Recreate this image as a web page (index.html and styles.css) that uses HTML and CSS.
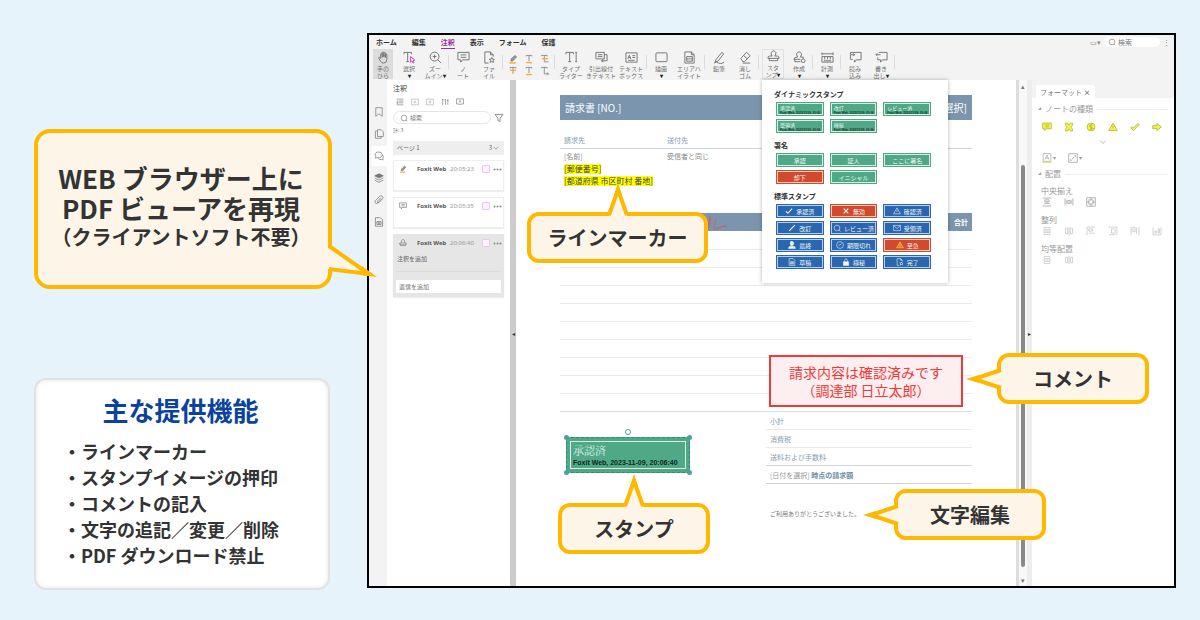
FILE: index.html
```html
<!DOCTYPE html>
<html lang="ja">
<head>
<meta charset="utf-8">
<meta name="viewport" content="width=device-width, initial-scale=1">
<title>WEBブラウザー上のPDFビューア</title>
<link rel="stylesheet" href="styles.css">
</head>
<body>
<svg class="sprite" aria-hidden="true">
  <symbol id="hand" viewBox="0 0 14 14"><path d="M4 8V3.500q0-1 .8-1t.8 1V7M5.600 6.500V2q0-1 .9-1t.9 1v4.500M7.400 6.500V2.500q0-1 .8-1t.8 1V7M9 7V4q0-1 .8-1t.8 1v5q0 4-3.600 4-2 0-3.200-2L2 8q-.5-1 .3-1.200T4 8"/></symbol>
  <symbol id="select" viewBox="0 0 14 14"><path d="M1 3.500V1.500h8v2M5 1.500v10M3.500 11.500h3"/><path class="pink" d="M8 6v6l1.600-1.400L11 13l1-.6-1.200-2.100 2-.5z"/></symbol>
  <symbol id="zoomin" viewBox="0 0 14 14"><circle cx="6" cy="6" r="4.800"/><path d="M6 4v4M4 6h4M9.500 9.500L13 13"/></symbol>
  <symbol id="note" viewBox="0 0 14 14"><path d="M1 1.500h12v8H6L4 12V9.500H1zM4 4.200h6M4 6.800h6"/></symbol>
  <symbol id="file" viewBox="0 0 14 14"><path d="M6 13H2V1h6l3 3v2M8 1v3h3M9.500 7l.8 1.800 2 .2-1.500 1.300.5 2-1.800-1-1.800 1 .5-2L6.700 9l2-.2z"/></symbol>
  <symbol id="marker" viewBox="0 0 14 14"><path class="gold" d="M2 12.500h9"/><path class="pen" d="M4 10l.5-3 5-5 2.500 2-5 5.500z"/></symbol>
  <symbol id="tline" viewBox="0 0 14 14"><path d="M3 3.500V2h8v1.500M7 2v8"/><path class="gold" d="M3 12h8"/></symbol>
  <symbol id="tstrike" viewBox="0 0 14 14"><path d="M3 3.500V2h8v1.500M7 2v9"/><path class="gold" d="M3 6h8"/></symbol>
  <symbol id="trepl" viewBox="0 0 14 14"><path d="M2 3V2h8v1.500M6 2v9h6"/><path class="gold" d="M3 6.500h8"/></symbol>
  <symbol id="tins" viewBox="0 0 14 14"><path d="M2 3V2h8v1.500M6 2v9h6M10 9l2 2-2 2"/></symbol>
  <symbol id="typewriter" viewBox="0 0 14 14"><path d="M1 3.500V1.500h8v2M5 1.500v10M3.500 11.500h3M12 1.500v10M11 1.500h2M11 11.500h2"/></symbol>
  <symbol id="callout" viewBox="0 0 14 14"><path d="M1 1.500h9v7H1zM3 4h5M3 6h5M10 4h3v6.500H7M9 9l-2 1.500L9 12"/></symbol>
  <symbol id="textbox" viewBox="0 0 14 14"><path d="M1 2h12v10H1zM3 8.500l1.700-4 1.600 4M3.500 7h2.300M8 5h3M8 7h3M3.500 10h7"/></symbol>
  <symbol id="rect" viewBox="0 0 14 14"><rect x="1" y="2" width="12" height="9.500" rx="1"/></symbol>
  <symbol id="area" viewBox="0 0 14 14"><path d="M2 1h7l3 3v9H2zM9 1v3h3M4 6h6v5H4zM4 8.500h6"/></symbol>
  <symbol id="pencil" viewBox="0 0 14 14"><path d="M3 9.500L9.500 1.500l2 1.500-6 8-3 .8zM1 13q3-2 5 0t6-1"/></symbol>
  <symbol id="eraser" viewBox="0 0 14 14"><path d="M2 8l6-6.500 4 3.500-6 6.500H4zM5 4.800L9 8.500M4 13h8"/></symbol>
  <symbol id="stamp" viewBox="0 0 14 14"><path d="M5.500 6.500Q4 4 4.500 2.500 5.500 1 7 1t2.500 1.500Q10 4 8.500 6.500h3Q13 6.500 13 9H1q0-2.500 1.500-2.500zM2.500 9v2.500h9V9"/></symbol>
  <symbol id="stampadd" viewBox="0 0 14 14"><path d="M5 6.500Q3.500 4 4 2.500 5 1 6.500 1T9 2.500Q9.500 4 8 6.500h3V8M1 9q0-2.500 4-2.500M1 9h7M2 9v2.500h6"/><circle cx="11" cy="10.500" r="2"/></symbol>
  <symbol id="measure" viewBox="0 0 14 14"><path d="M1 1.500v3M13 1.500v3M1 3h12M1 6h12v6H1zM4 6v3M7 6v3M10 6v3M3 10.500h8"/></symbol>
  <symbol id="import" viewBox="0 0 14 14"><path d="M4 9H1.500V1.500h11.500v8H8L6 12V9.500M2 4h4M4.500 2.500L6 4 4.500 5.500"/></symbol>
  <symbol id="export" viewBox="0 0 14 14"><path d="M4 1.500h9v8H8L6 12V9.500H3V7M1 4h5M2.500 2.500L1 4l1.500 1.500"/></symbol>
  <symbol id="search" viewBox="0 0 14 14"><circle cx="7" cy="7" r="5"/><path d="M10.500 10.500L13 13"/></symbol>
  <symbol id="filter" viewBox="0 0 14 14"><path d="M1.500 2h11L8.500 7.500V12l-3-1.500v-3z"/></symbol>
  <symbol id="bookmark" viewBox="0 0 14 14"><path d="M2.500 1h9v12L7 9.500 2.500 13z"/></symbol>
  <symbol id="pages" viewBox="0 0 14 14"><path d="M5 1h5l3 3v6.500H5zM5 3H2v10h8v-2.500"/></symbol>
  <symbol id="chat" viewBox="0 0 14 14"><path d="M2 10l.5-2Q-.5 3 5 1.500q6-1 6.500 3.500.5 5-8 4.500zM12 5.500q2.500 3 .3 5l.5 2-2-.7q-3.300.8-4.800-1.300M4 5.500h.5M6.500 5.500H7M9 5.500h.5"/></symbol>
  <symbol id="layers" viewBox="0 0 14 14"><path class="solid" d="M7 1l6 3-6 3-6-3z"/><path d="M1 7l6 3 6-3M1 10l6 3 6-3"/></symbol>
  <symbol id="clip" viewBox="0 0 14 14"><path d="M11 5l-5.500 6Q3.500 13 2 11.300T2.300 7.500L8 1.800q2-1.500 3.700 0t.3 3.500L7 10.500Q5.800 11.300 5 10.500T5 8.500L9.500 4"/></symbol>
  <symbol id="doc" viewBox="0 0 14 14"><path d="M2 1h7l3 3v9H2zM4 6.500h6v4H4zM6 6.500v4M8 6.500v4"/></symbol>
  <symbol id="list" viewBox="0 0 14 14"><path d="M1 2h12M5 5.500h8M5 8.500h8M1 12h12M2.500 4.500v5M1 8l1.500 1.500L4 8"/></symbol>
  <symbol id="plusbox" viewBox="0 0 14 14"><path d="M1 2h12v10H1zM7 4.500v5M4.500 7h5"/></symbol>
  <symbol id="sort" viewBox="0 0 14 14"><path d="M3 12V2M1 4l2-2 2 2M8 2v10M6.500 4L8 2M12 2v10M11 4.500h2"/></symbol>
  <symbol id="xnote" viewBox="0 0 14 14"><path d="M1 1.500h12v9H8L7 12l-1-1.500H1zM5 4l4 4M9 4L5 8"/></symbol>
  <symbol id="down" viewBox="0 0 14 14"><path d="M3 5l4 4 4-4"/></symbol>
  <symbol id="check" viewBox="0 0 14 14"><path d="M1.500 7.500L5 11l7.500-8"/></symbol>
  <symbol id="cross" viewBox="0 0 14 14"><path d="M3 3l8 8M11 3l-8 8"/></symbol>
  <symbol id="tri" viewBox="0 0 14 14"><path d="M7 1.500L13 12H1zM7 5v4M7 10.500v.5"/></symbol>
  <symbol id="slash" viewBox="0 0 14 14"><path d="M2 12L12 2"/></symbol>
  <symbol id="mail" viewBox="0 0 14 14"><path d="M1 2.500h12v9H1zM1 3l6 5 6-5"/></symbol>
  <symbol id="person" viewBox="0 0 14 14"><path class="solid" d="M7 1q3 0 3 3T7 8 4 4t3-3zM1 13q0-4 4-4h4q4 0 4 4z"/></symbol>
  <symbol id="clock" viewBox="0 0 14 14"><circle cx="7" cy="7" r="6"/><path d="M7 7l3-3M7 7H4"/></symbol>
  <symbol id="lock" viewBox="0 0 14 14"><path class="solid" d="M2.500 6.500h9V13h-9z"/><path d="M4.500 6V4Q5 1.500 7 1.500T9.500 4v2"/></symbol>
  <symbol id="alignv" viewBox="0 0 14 14"><path d="M1 1.500h12M1 12.500h12M4 4h6v2.500H4zM7 6.500V9M3 9h8"/></symbol>
  <symbol id="alignh" viewBox="0 0 14 14"><path d="M1.500 2v10M12.500 2v10M4 4v6M10 4v6M5.500 5h3v4h-3z"/></symbol>
  <symbol id="alignc" viewBox="0 0 14 14"><path d="M1 1h12v12H1zM4 4h6v6H4zM7 1v4M7 9v4M1 7h4M9 7h4"/></symbol>
  <symbol id="boxh" viewBox="0 0 14 14"><path d="M3 2h8v3H3zM1 7h12M3 9h8v3H3z"/></symbol>
  <symbol id="boxv" viewBox="0 0 14 14"><path d="M2 3h3v8H2zM7 1v12M9 3h3v8H9z"/></symbol>
  <symbol id="boxl" viewBox="0 0 14 14"><path d="M13 1.500H1.500V13M4 4h5v3H4zM4 10h8"/></symbol>
  <symbol id="boxr" viewBox="0 0 14 14"><path d="M1 1.500h11.500V13M5 4h5v6H5zM2 12h8"/></symbol>
  <symbol id="boxt" viewBox="0 0 14 14"><path d="M1.500 1v12M12.500 1v12M4 2h3v6H4zM9 2v9"/></symbol>
  <symbol id="boxb" viewBox="0 0 14 14"><path d="M1.500 2v10.500h11V2M4 7h2v3H4zM8.500 4h2v6h-2z"/></symbol>
  <symbol id="dollar" viewBox="0 0 14 14"><circle cx="7" cy="7" r="5.500"/><path d="M9 4.500Q5 3.500 5 5.500T9 8.500 5 10M7 3v8"/></symbol>
  <symbol id="arrow" viewBox="0 0 14 14"><path d="M1 5h6V2l6 5-6 5V9H1z"/></symbol>
  <symbol id="ytick" viewBox="0 0 14 14"><path d="M1 8l2-1.500 2 2L11 2l2 1.500L5 12z"/></symbol>
  <symbol id="ycross" viewBox="0 0 14 14"><path d="M2 1.500h3l2 3 2-3h3v3L9.500 7l2.500 3v2.500H9l-2-3-2 3H2V10l2.500-3L2 4.500z"/></symbol>
  <symbol id="fontbox" viewBox="0 0 14 14"><path d="M1 1h12v12H1zM4 10l3-7 3 7M5 8h4"/></symbol>
  <symbol id="alpha" viewBox="0 0 14 14"><path d="M1 1h12v12H1zM9 3.500h1.500V5M5 10.500H3.500V9M5 9l4-4"/></symbol>
</svg>

<main class="slide">
  <section class="intro">
    <div class="callout callout-main">
      <p>WEB ブラウザー上に<br>PDF ビューアを再現</p>
      <p class="sub">（クライアントソフト不要）</p>
      <svg class="tail tail-main" viewBox="0 0 50 36"><path class="tail-fill" d="M0 5L4 5 46 32 4 26 0 26z"/><path class="tail-line" d="M1 3L41 31 1 26"/><path class="tail-tip" d="M34 23L49 34 32 32z"/></svg>
    </div>
    <div class="features">
      <h2>主な提供機能</h2>
      <ul>
        <li>ラインマーカー</li>
        <li>スタンプイメージの押印</li>
        <li>コメントの記入</li>
        <li>文字の追記／変更／削除</li>
        <li>PDF ダウンロード禁止</li>
      </ul>
    </div>
  </section>

  <section class="app">
    <header class="top">
      <nav class="menu">
        <a href="#">ホーム</a><a href="#">編集</a><a href="#" class="on">注釈</a><a href="#">表示</a><a href="#">フォーム</a><a href="#">保護</a>
        <span class="menu-end">
          <button class="mini" aria-label="表示切替">▭▾</button>
          <label class="find"><svg class="ic"><use href="#search"/></svg><input type="text" placeholder="検索" aria-label="検索"></label>
          <button class="mini" aria-label="その他">⋮</button>
        </span>
      </nav>
      <div class="ribbon">
        <button class="tool on"><svg class="ic"><use href="#hand"/></svg>手の<br>ひら</button>
        <button class="tool"><svg class="ic"><use href="#select"/></svg>選択<br><b>▾</b></button>
        <button class="tool"><svg class="ic"><use href="#zoomin"/></svg>ズー<br>ムイン<b>▾</b></button>
        <i class="sep"></i>
        <button class="tool"><svg class="ic"><use href="#note"/></svg>ノ<br>ート</button>
        <button class="tool"><svg class="ic"><use href="#file"/></svg>ファ<br>イル</button>
        <i class="sep"></i>
        <div class="marks">
          <button aria-label="ハイライト"><svg class="ic"><use href="#marker"/></svg></button>
          <button aria-label="下線"><svg class="ic"><use href="#tline"/></svg></button>
          <button aria-label="置換"><svg class="ic"><use href="#trepl"/></svg></button>
          <button aria-label="取り消し線"><svg class="ic"><use href="#tstrike"/></svg></button>
          <button aria-label="波線"><svg class="ic"><use href="#tline"/></svg></button>
          <button aria-label="挿入"><svg class="ic"><use href="#tins"/></svg></button>
        </div>
        <i class="sep"></i>
        <button class="tool wide"><svg class="ic"><use href="#typewriter"/></svg>タイプ<br>ライター</button>
        <button class="tool wide"><svg class="ic"><use href="#callout"/></svg>引出線付<br>きテキスト</button>
        <button class="tool wide"><svg class="ic"><use href="#textbox"/></svg>テキスト<br>ボックス</button>
        <i class="sep"></i>
        <button class="tool"><svg class="ic"><use href="#rect"/></svg>描画<br><b>▾</b></button>
        <button class="tool wide"><svg class="ic"><use href="#area"/></svg>エリアハ<br>イライト</button>
        <i class="sep"></i>
        <button class="tool"><svg class="ic"><use href="#pencil"/></svg>鉛筆<br>&nbsp;</button>
        <button class="tool"><svg class="ic"><use href="#eraser"/></svg>消し<br>ゴム</button>
        <i class="sep"></i>
        <div class="drop">
          <button class="tool open"><svg class="ic"><use href="#stamp"/></svg>スタ<br>ンプ<b>▾</b></button>
          <div class="stamps">
            <h3>ダイナミックスタンプ</h3>
            <div class="stamp-grid">
              <button class="st dyn">承認済<small>Foxit Web, 2023/11/09, 20:06</small></button>
              <button class="st dyn">改訂<small>Foxit Web, 2023/11/09, 20:06</small></button>
              <button class="st dyn">レビュー済<small>Foxit Web, 2023/11/09, 20:06</small></button>
              <button class="st dyn">受領済<small>Foxit Web, 2023/11/09, 20:06</small></button>
              <button class="st dyn">極秘<small>Foxit Web, 2023/11/09, 20:06</small></button>
            </div>
            <h3>署名</h3>
            <div class="stamp-grid">
              <button class="st">承認</button><button class="st">証人</button><button class="st">ここに署名</button>
              <button class="st red">却下</button><button class="st">イニシャル</button>
            </div>
            <h3>標準スタンプ</h3>
            <div class="stamp-grid">
              <button class="st blue"><svg class="ic bold"><use href="#check"/></svg>承認済</button>
              <button class="st red"><svg class="ic bold"><use href="#cross"/></svg>無効</button>
              <button class="st blue"><svg class="ic"><use href="#tri"/></svg>確認済</button>
              <button class="st blue"><svg class="ic bold"><use href="#slash"/></svg>改訂</button>
              <button class="st blue"><svg class="ic"><use href="#search"/></svg>レビュー済</button>
              <button class="st blue"><svg class="ic"><use href="#mail"/></svg>受領済</button>
              <button class="st blue"><svg class="ic"><use href="#person"/></svg>最終</button>
              <button class="st blue"><svg class="ic"><use href="#clock"/></svg>期限切れ</button>
              <button class="st red"><svg class="ic warn"><use href="#tri"/></svg>至急</button>
              <button class="st blue"><svg class="ic"><use href="#doc"/></svg>草稿</button>
              <button class="st blue"><svg class="ic"><use href="#lock"/></svg>極秘</button>
              <button class="st blue"><svg class="ic"><use href="#file"/></svg>完了</button>
            </div>
          </div>
        </div>
        <button class="tool"><svg class="ic"><use href="#stampadd"/></svg>作成<br><b>▾</b></button>
        <i class="sep"></i>
        <button class="tool"><svg class="ic"><use href="#measure"/></svg>計測<br><b>▾</b></button>
        <i class="sep"></i>
        <button class="tool"><svg class="ic"><use href="#import"/></svg>読み<br>込み</button>
        <button class="tool"><svg class="ic"><use href="#export"/></svg>書き<br>出し<b>▾</b></button>
        <i class="sep"></i>
      </div>
    </header>

    <div class="work">
      <nav class="rail">
        <button aria-label="しおり"><svg class="ic"><use href="#bookmark"/></svg></button>
        <button aria-label="ページ"><svg class="ic"><use href="#pages"/></svg></button>
        <button class="on" aria-label="注釈"><svg class="ic"><use href="#chat"/></svg></button>
        <button aria-label="レイヤー"><svg class="ic"><use href="#layers"/></svg></button>
        <button aria-label="添付"><svg class="ic"><use href="#clip"/></svg></button>
        <button aria-label="フィールド"><svg class="ic"><use href="#doc"/></svg></button>
      </nav>

      <aside class="comments">
        <h3>注釈</h3>
        <div class="actions">
          <svg class="ic"><use href="#list"/></svg><svg class="ic dim"><use href="#plusbox"/></svg><svg class="ic dim"><use href="#plusbox"/></svg><svg class="ic"><use href="#sort"/></svg><svg class="ic"><use href="#xnote"/></svg>
        </div>
        <div class="search-row">
          <label class="find"><svg class="ic"><use href="#search"/></svg><input type="text" placeholder="検索" aria-label="注釈を検索"></label>
          <svg class="ic"><use href="#filter"/></svg>
        </div>
        <p class="count">計: 3</p>
        <div class="page-head"><span>ページ 1</span><span class="fold">3 <svg class="ic"><use href="#down"/></svg></span></div>
        <article class="note">
          <div class="note-head"><svg class="ic"><use href="#marker"/></svg><strong>Foxit Web</strong><time>20:05:23</time><input type="checkbox" aria-label="選択"><svg class="dots" viewBox="0 0 9 3"><circle cx="1.500" cy="1.500" r="1"/><circle cx="4.500" cy="1.500" r="1"/><circle cx="7.500" cy="1.500" r="1"/></svg></div>
        </article>
        <article class="note">
          <div class="note-head"><svg class="ic"><use href="#note"/></svg><strong>Foxit Web</strong><time>20:05:35</time><input type="checkbox" aria-label="選択"><svg class="dots" viewBox="0 0 9 3"><circle cx="1.500" cy="1.500" r="1"/><circle cx="4.500" cy="1.500" r="1"/><circle cx="7.500" cy="1.500" r="1"/></svg></div>
        </article>
        <article class="note active">
          <div class="note-head"><svg class="ic"><use href="#stamp"/></svg><strong>Foxit Web</strong><time>20:06:40</time><input type="checkbox" aria-label="選択"><svg class="dots" viewBox="0 0 9 3"><circle cx="1.500" cy="1.500" r="1"/><circle cx="4.500" cy="1.500" r="1"/><circle cx="7.500" cy="1.500" r="1"/></svg></div>
          <p>注釈を追加</p>
          <input class="reply" type="text" placeholder="返信を追加" aria-label="返信を追加">
        </article>
      </aside>
      <div class="divider">◂</div>

      <div class="viewer">
        <div class="sheet">
          <div class="title-bar"><span>請求書 [NO.]</span><span>[日付を選択]</span></div>
          <div class="parties labels"><span>請求先</span><span>送付先</span></div>
          <div class="parties values">
            <span>[名前]</span><span>受信者と同じ</span>
            <mark>[郵便番号]</mark>
            <mark>[都道府県 市区町村 番地]</mark>
            <div class="callout callout-line">ラインマーカー
              <svg class="tail tail-up" viewBox="0 0 24 34"><path class="tail-fill" d="M3 34L12 7l9 27z"/><path class="tail-line" d="M3 32L12 7l9 25"/><path class="tail-tip" d="M8 12L12 0l4 12z"/></svg>
            </div>
          </div>
          <div class="items">
            <table>
              <thead><tr><th></th><th>合計</th></tr></thead>
              <tbody>
                <tr><td></td><td></td></tr><tr><td></td><td></td></tr><tr><td></td><td></td></tr><tr><td></td><td></td></tr><tr><td></td><td></td></tr>
                <tr><td></td><td></td></tr><tr><td></td><td></td></tr><tr><td></td><td></td></tr><tr><td></td><td></td></tr><tr><td></td><td></td></tr>
              </tbody>
            </table>
            <svg class="scribble" viewBox="0 0 36 16"><path d="M4 1Q3 8 1 14M5 3L3 13M10 4L8 14q6 0 12-4M13 13q5-4 8 0M32 12l1 1"/></svg>
            <div class="remark">請求内容は確認済みです<br>（調達部 日立太郎）
              <div class="callout callout-comment">コメント
                <svg class="tail tail-left" viewBox="0 0 36 24"><path class="tail-fill" d="M36 3L9 12l27 9z"/><path class="tail-line" d="M35 3L8 12l27 9"/><path class="tail-tip" d="M13 8L0 12l13 4z"/></svg>
              </div>
            </div>
          </div>
          <div class="bottom">
            <div class="approved">
              <div class="approved-in"><span>承認済</span><strong>Foxit Web, 2023-11-09, 20:06:40</strong></div>
              <i class="h h1"></i><i class="h h2"></i><i class="h h3"></i><i class="h h4"></i><i class="knob"></i>
              <div class="callout callout-stamp">スタンプ
                <svg class="tail tail-up" viewBox="0 0 24 34"><path class="tail-fill" d="M3 34L12 7l9 27z"/><path class="tail-line" d="M3 32L12 7l9 25"/><path class="tail-tip" d="M8 12L12 0l4 12z"/></svg>
              </div>
            </div>
            <div class="sums">
              <p>小計</p>
              <p>消費税</p>
              <p class="thick">送料および手数料</p>
              <p class="thick"><span>[日付を選択]</span> <b>時点の請求額</b></p>
              <div class="thanks">ご利用ありがとうございました。
                <div class="callout callout-edit">文字編集
                  <svg class="tail tail-left" viewBox="0 0 36 24"><path class="tail-fill" d="M36 3L9 12l27 9z"/><path class="tail-line" d="M35 3L8 12l27 9"/><path class="tail-tip" d="M13 8L0 12l13 4z"/></svg>
                </div>
              </div>
            </div>
          </div>
        </div>
      </div>
      <div class="scroll"><span>▴</span><div class="track"><i></i></div><span>▾</span></div>
      <div class="divider light">▸</div>

      <aside class="format">
        <div class="tabs"><button>フォーマット <b>×</b></button></div>
        <div class="format-body">
          <h3>ノートの種類</h3>
          <div class="icons yellow">
            <svg class="ic"><use href="#note"/></svg><svg class="ic"><use href="#ycross"/></svg><svg class="ic"><use href="#dollar"/></svg><svg class="ic"><use href="#tri"/></svg><svg class="ic"><use href="#ytick"/></svg><svg class="ic"><use href="#arrow"/></svg>
          </div>
          <div class="more"><svg class="ic"><use href="#down"/></svg></div>
          <div class="icons pick"><span class="color"><svg class="ic"><use href="#fontbox"/></svg>▾</span><span><svg class="ic"><use href="#alpha"/></svg>▾</span></div>
          <h3>配置</h3>
          <h4>中央揃え</h4>
          <div class="icons"><svg class="ic"><use href="#alignv"/></svg><svg class="ic"><use href="#alignh"/></svg><svg class="ic"><use href="#alignc"/></svg></div>
          <h4>整列</h4>
          <div class="icons faint"><svg class="ic"><use href="#boxh"/></svg><svg class="ic"><use href="#boxv"/></svg><svg class="ic"><use href="#boxl"/></svg><svg class="ic"><use href="#boxr"/></svg><svg class="ic"><use href="#boxt"/></svg><svg class="ic"><use href="#boxb"/></svg></div>
          <h4>均等配置</h4>
          <div class="icons faint"><svg class="ic"><use href="#boxh"/></svg><svg class="ic"><use href="#boxv"/></svg></div>
        </div>
      </aside>
    </div>
  </section>
</main>
</body>
</html>
```

FILE: styles.css
```css
* { box-sizing: border-box; margin: 0; padding: 0; }

body {
  background: #e7f3fa;
  color: #333;
  font-family: "Noto Sans CJK JP", sans-serif;
}

button, input { font: inherit; color: inherit; border: 0; background: none; }
a { color: inherit; text-decoration: none; }
h2, h3, h4 { font-weight: 400; }
.sprite { display: none; }

.ic {
  width: 10px;
  height: 10px;
  flex: none;
  fill: none;
  stroke: currentColor;
  stroke-width: 1;
}
.pink { stroke: #c23bc2; }
.pen { fill: #999; }
.gold { stroke: #f0b030; stroke-width: 2; }
.solid { fill: currentColor; }

.slide {
  display: flex;
  gap: 35px;
  min-height: 100vh;
  padding: 33px 24px 31px 34px;
}

/* left column */
.intro {
  flex: none;
  width: 298px;
  padding-top: 96px;
}

.callout {
  border: 4px solid #ffb800;
  border-radius: 12px;
  background: #fcf5e8;
  color: #333;
  font-size: 20px;
  font-weight: 700;
  line-height: 43px;
  text-align: center;
  white-space: nowrap;
}
.callout-main {
  position: relative;
  height: 160px;
  padding: 30px 4px 0 0;
  border-radius: 16px;
  font-size: 26px;
  line-height: 30px;
}
.callout-main .sub { font-size: 20px; line-height: 28px; }

.tail { position: absolute; overflow: visible; }
.tail-fill { fill: #fcf5e8; }
.tail-line { fill: none; stroke: #ffb800; stroke-width: 4; }
.tail-tip { fill: #ffb800; }
.tail-main { left: 290px; top: 110px; width: 50px; height: 36px; }
.tail-up { left: calc(50% - 12px); top: -33px; width: 24px; height: 34px; }
.tail-left { left: -35px; top: 10px; width: 36px; height: 24px; }

.features {
  width: 296px;
  margin-top: 89px;
  padding: 13px 30px 20px 27px;
  border: 2px solid #e2e2e2;
  border-radius: 12px;
  background: #fff;
  box-shadow: inset 0 0 4px #e4e4e4;
}
.features h2 {
  color: #0b439b;
  font-size: 26px;
  font-weight: 700;
  line-height: 34px;
  text-align: center;
}
.features ul {
  margin-top: 11px;
  list-style: none;
  font-size: 18px;
  font-weight: 700;
  line-height: 26px;
  white-space: nowrap;
}
.features li::before { content: "・"; }

/* application window */
.app {
  display: flex;
  flex: 1;
  flex-direction: column;
  min-width: 0;
  margin-bottom: 2px;
  border: 2px solid #000;
  background: #fff;
}
.top { background: #f3f3f3; }

.menu {
  display: flex;
  align-items: center;
  gap: 15px;
  height: 14px;
  padding: 0 4px 0 7px;
  font-size: 7px;
  font-weight: 700;
  line-height: 11px;
}
.menu .on { color: #9a2f9a; box-shadow: 0 1px #9a2f9a; }
.menu-end { display: flex; align-items: center; gap: 3px; margin-left: auto; font-weight: 400; }
.menu .find { width: 56px; height: 10px; }
.mini { color: #888; font-size: 7px; line-height: 10px; }

.find {
  display: flex;
  align-items: center;
  gap: 2px;
  padding: 0 4px;
  border-radius: 8px;
  background: #fff;
  color: #666;
}
.find .ic { width: 8px; height: 8px; }
.find input { width: 100%; min-width: 0; outline: 0; }
::placeholder { color: #777; opacity: 1; }

.ribbon {
  display: flex;
  height: 31px;
  padding-left: 1px;
  color: #707070;
  font-size: 6px;
  line-height: 7px;
}
.tool {
  flex: none;
  width: 26px;
  height: 30px;
  text-align: center;
  white-space: nowrap;
}
.tool .ic { display: block; width: 13px; height: 13px; margin: 1px auto; }
.tool b { color: #222; }
.tool.wide { width: 30px; }
.tool.on { width: 20px; margin: 0 3px; background: #dcdcdc; }
.tool.open { width: 22px; margin: 0 2px; border: 1px solid #e2e2e2; }
.tool.open .ic { margin-top: 0; }
.sep { flex: none; width: 1px; height: 14px; margin: 6px 1px 0 0; background: #dcdcdc; }
.marks {
  display: grid;
  grid-template-columns: repeat(3, 16px);
  flex: none;
  align-content: center;
  gap: 2px 0;
  padding: 0 1px;
}
.marks .ic { display: block; width: 10px; height: 10px; margin: 0 auto; }

/* stamp menu */
.drop { position: relative; flex: none; width: 26px; }
.stamps {
  position: absolute;
  z-index: 3;
  top: 31px;
  left: 2px;
  width: 186px;
  padding: 9px 17px 7px 12px;
  background: #fff;
  box-shadow: 0 0 4px rgba(0, 0, 0, .3);
}
.stamps h3 {
  height: 12px;
  color: #333;
  font-weight: 700;
  line-height: 10px;
}
.stamp-grid {
  display: grid;
  grid-template-columns: repeat(3, 1fr);
  gap: 3px 6px;
  margin: 1px 0 7px 2px;
}
.st {
  display: flex;
  align-items: center;
  justify-content: center;
  gap: 3px;
  height: 14px;
  border: 1px solid #4fa987;
  outline: 1px solid #d8ece4;
  outline-offset: -2px;
  background: #4fa987;
  color: #eef8f4;
  line-height: 7px;
  white-space: nowrap;
}
.st .ic { width: 8px; height: 8px; }
.st .bold { stroke-width: 2; }
.st .warn { color: #ffc84a; fill: #d8862a; }
.st.red { border-color: #d04a2e; outline-color: #f2cfc6; background: #d04a2e; }
.st.blue { border-color: #2a67b0; outline-color: #b9cde6; background: #2a67b0; }
.st.dyn { flex-direction: column; align-items: flex-start; gap: 0; padding-left: 3px; font-size: 5px; line-height: 7px; }
.st small { color: #103326; font: 700 3px/4px "Liberation Sans", sans-serif; }

/* work area */
.work { display: flex; flex: 1; min-height: 0; }

.rail {
  display: flex;
  flex: none;
  flex-direction: column;
  gap: 2px;
  width: 18px;
  padding: 22px 0 0 2px;
  background: #f3f3f3;
  color: #777;
}
.rail button { height: 20px; }
.rail .on { background: #fff; }
.rail .ic { display: block; margin: 0 auto; }

.comments {
  flex: none;
  width: 123px;
  padding: 3px 6px 0;
  color: #666;
  font-size: 6px;
  line-height: 10px;
}
.comments h3 { color: #444; font-size: 7px; }
.actions { display: flex; align-items: center; gap: 7px; height: 18px; padding: 0 3px; }
.actions .ic, .note .ic { width: 8px; height: 8px; }
.dim { opacity: .6; }
.search-row { display: flex; align-items: center; gap: 3px; margin-bottom: 2px; }
.search-row .find { flex: 1; height: 13px; padding: 0 6px; border: 1px solid #e6e6e6; }
.count { font-size: 5px; line-height: 8px; }
.page-head {
  display: flex;
  justify-content: space-between;
  margin: 7px 0 5px;
  padding: 2px 4px;
  background: #eee;
}
.fold { display: flex; align-items: center; }
.fold .ic { width: 8px; height: 8px; }
.note {
  min-height: 31px;
  margin-bottom: 6px;
  padding: 3px 2px;
  border: 1px solid #eee;
  box-shadow: 0 1px 1px #eee;
}
.note-head { display: flex; align-items: center; gap: 3px; padding-left: 3px; font-family: "Noto Sans", sans-serif; }
.note strong { flex: none; width: 30px; margin-left: 7px; color: #555; }
.note time { flex: none; width: 29px; color: #999; }
.note input[type="checkbox"] {
  appearance: none;
  flex: none;
  width: 8px;
  height: 8px;
  border: 1px solid #ecc8ec;
  border-radius: 1px;
  background: #fdf2fd;
}
.dots { flex: none; width: 9px; height: 3px; fill: #888; }
.note.active { border-color: #e6e6e6; background: #e6e6e6; }
.note.active p { margin: 6px 0; padding: 0 0 7px 1px; border-bottom: 1px solid #dcdcdc; }
.reply { display: block; width: 100%; height: 13px; margin-top: 8px; padding: 0 3px; background: #fff; }

.divider {
  display: flex;
  align-items: center;
  justify-content: center;
  flex: none;
  width: 6px;
  background: #ccc;
  color: #333;
  font-size: 6px;
}
.divider.light { width: 5px; background: #ededed; }

/* invoice */
.viewer { flex: 1; min-width: 0; padding: 15px 44px 0; }
.sheet { color: #888; font-size: 7px; }
.title-bar {
  display: flex;
  align-items: center;
  justify-content: space-between;
  height: 25px;
  padding: 0 5px;
  background: #7a95ad;
  color: #fff;
  font-size: 10px;
}
.parties { position: relative; display: grid; grid-template-columns: 103px 1fr; padding: 0 4px; line-height: 12px; }
.labels { margin-top: 14px; padding-bottom: 2px; border-bottom: 1px solid #cdd5dc; color: #7f9bb3; }
.values { padding-top: 1px; }
mark {
  grid-column: 1 / -1;
  justify-self: start;
  height: 10px;
  margin-top: 2px;
  background: #ff0;
  color: #444;
  font-size: 8px;
  line-height: 10px;
}
.values .callout { position: absolute; z-index: 2; top: 63px; left: -33px; width: 181px; }

.items { position: relative; margin-top: 27px; }
.items table { width: 100%; border-collapse: collapse; }
.items th { height: 18px; padding-right: 4px; background: #7a95ad; color: #fff; line-height: 12px; text-align: right; }
.items td { height: 18px; border-bottom: 1px solid #ebebeb; }
.items tr:last-child td { border-color: #ddd; }
.scribble { position: absolute; top: 2px; left: 146px; width: 36px; height: 16px; fill: none; stroke: #c4607c; }

.remark {
  position: absolute;
  right: 9px;
  bottom: 5px;
  width: 194px;
  padding: 6px 0;
  border: 2px solid #f03a3a;
  background: #fdeef0;
  color: #f03a3a;
  font-size: 14px;
  line-height: 18px;
  text-align: center;
}
.callout-comment { position: absolute; z-index: 2; top: -4px; left: 226px; width: 152px; }

.bottom { display: flex; justify-content: space-between; align-items: flex-start; }
.approved {
  position: relative;
  width: 124px;
  margin: 25px 0 0 6px;
  padding: 3px;
  border: 1px dashed #2c8a83;
  background: #4fa987;
}
.approved-in { padding-left: 2px; border: 1px solid #d8ece4; line-height: 8px; white-space: nowrap; }
.approved span { display: block; color: #dcefe7; font: 11px/17px "Noto Serif CJK JP", "Noto Sans CJK JP", serif; }
.approved strong { display: block; padding-bottom: 1px; color: #10241c; font: 700 7px/8px "Liberation Sans", sans-serif; }
.h, .knob { position: absolute; width: 5px; height: 5px; border-radius: 50%; background: #4aa39b; }
.h1 { top: -3px; left: -3px; }
.h2 { top: -3px; right: -3px; }
.h3 { bottom: -3px; left: -3px; }
.h4 { bottom: -3px; right: -3px; }
.knob { top: -9px; left: 58px; width: 6px; height: 6px; border: 1px solid #4aa39b; background: #fff; }
.callout-stamp { position: absolute; z-index: 2; top: 65px; left: -9px; width: 152px; }

.sums { width: 50%; }
.sums p { height: 18px; padding-left: 4px; border-bottom: 1px solid #ebebeb; color: #7f9bb3; line-height: 18px; }
.sums .thick { border-color: #d5d5d5; }
.sums p span { color: #999; }
.sums b { color: #6d8ba5; }
.thanks { position: relative; margin: 25px 0 0 4px; color: #777; font-size: 6px; line-height: 10px; }
.callout-edit { position: absolute; z-index: 2; top: -20px; left: 124px; width: 152px; }

.scroll {
  display: flex;
  flex: none;
  flex-direction: column;
  align-items: center;
  width: 11px;
  padding: 1px 0;
  border-left: 3px solid #ddd;
  background: #f8f8f8;
  color: #777;
  font-size: 7px;
  line-height: 10px;
}
.track { flex: 1; padding: 74px 0 8px; }
.track i { display: block; width: 4px; height: 100%; border-radius: 2px; background: #8a8a8a; }

/* format panel */
.format { flex: none; width: 142px; color: #999; font-size: 7px; line-height: 10px; }
.tabs { height: 18px; padding: 5px 4px 0; background: #f3f3f3; }
.tabs button { height: 13px; padding: 0 4px; border-radius: 3px 3px 0 0; background: #fff; color: #777; line-height: 12px; }
.format-body { padding: 6px 6px 0; }
.format h3 { display: flex; align-items: center; gap: 4px; font-size: 8px; }
.format h3::before { content: "◢"; font-size: 3px; }
.format h3::after { content: ""; flex: 1; border-top: 1px solid #eee; }
.format h4 { margin-top: 7px; padding-left: 3px; font-size: 8px; }
.icons { display: flex; gap: 12px; height: 12px; padding: 1px 4px 0; }
.yellow { height: 17px; padding-top: 8px; color: #a8a83c; }
.yellow .ic { fill: #f8f83a; }
.more { height: 16px; margin-top: 6px; text-align: center; line-height: 8px; }
.pick { height: 15px; padding-top: 0; }
.pick span { display: flex; gap: 1px; font-size: 6px; }
.color .ic { border-bottom: 1px solid #eeee5a; }
.pick + h3 { margin-top: 1px; }
.faint { opacity: .6; }
```
